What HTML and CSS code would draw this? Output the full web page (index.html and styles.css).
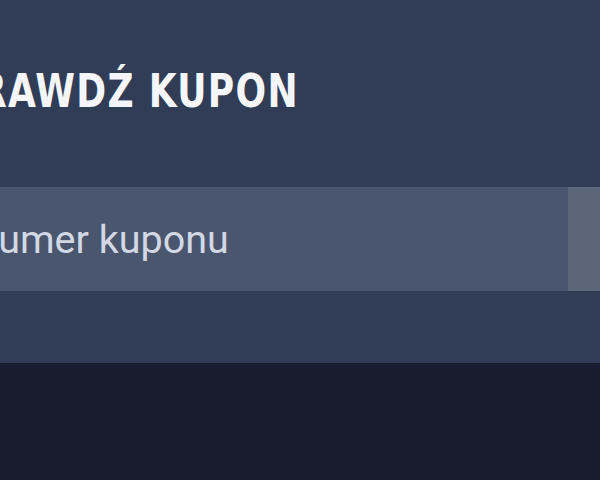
FILE: index.html
```html
<!DOCTYPE html>
<html lang="pl">
<head>
<meta charset="utf-8">
<link rel="stylesheet" href="styles.css">
</head>
<body>
<section class="panel">
  <div class="inner">
    <h1 class="title">SPRAWDŹ KUPON</h1>
    <form class="row">
      <input class="field" type="text" placeholder="Numer kuponu">
      <button class="btn" type="button"></button>
    </form>
  </div>
</section>
<footer class="bottom"></footer>
</body>
</html>
```

FILE: styles.css
```css
html, body {
  margin: 0;
  padding: 0;
  width: 600px;
  height: 480px;
  overflow: hidden;
  background: #161d2f;
}
.panel {
  background: #313d57;
  height: 363px;
  box-sizing: border-box;
  padding-top: 66px;
}
.inner {
  margin-left: -66px;
}
.title {
  margin: 0 0 0 -10px;
  font-family: "DejaVu Sans Condensed", "DejaVu Sans", sans-serif;
  font-weight: bold;
  font-size: 46px;
  line-height: 50px;
  color: #f4f6f9;
  letter-spacing: 1.5px;
  white-space: nowrap;
  transform: scaleX(0.87);
  transform-origin: left center;
}
.row {
  display: flex;
  margin: 71px 0 0 0;
  height: 104px;
}
.field {
  flex: 0 0 634px;
  box-sizing: border-box;
  height: 104px;
  border: 0;
  margin: 0;
  padding: 0 0 0 36px;
  background: #4a566d;
  font-family: Roboto, "Noto Sans", sans-serif;
  font-size: 39.5px;
  color: #d3d9e4;
  outline: none;
}
.field::placeholder {
  color: #d3d9e4;
  opacity: 1;
}
.btn {
  flex: 1 1 auto;
  border: 0;
  margin: 0;
  padding: 0;
  background: #5b6679;
}
```
